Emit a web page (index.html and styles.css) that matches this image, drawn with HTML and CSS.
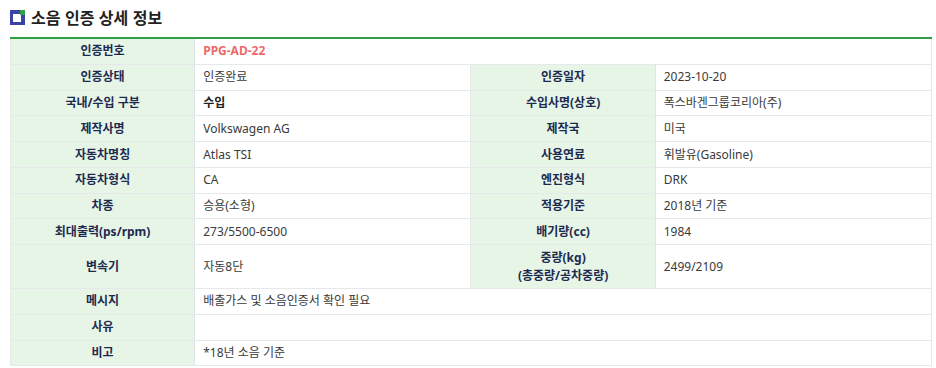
FILE: index.html
```html
<!DOCTYPE html>
<html lang="ko">
<head>
<meta charset="utf-8">
<link rel="stylesheet" href="styles.css">
</head>
<body>
<div class="wrap">
  <h2 class="title">
    <span class="ico"><span class="ico-in"></span><span class="ico-g"></span></span>
    소음 인증 상세 정보
  </h2>
  <table class="info">
    <colgroup><col class="c1"><col class="c2"><col class="c1"><col class="c2"></colgroup>
    <tr><th>인증번호</th><td colspan="3" class="red">PPG-AD-22</td></tr>
    <tr><th>인증상태</th><td>인증완료</td><th>인증일자</th><td>2023-10-20</td></tr>
    <tr><th>국내/수입 구분</th><td class="b">수입</td><th>수입사명(상호)</th><td>폭스바겐그룹코리아(주)</td></tr>
    <tr><th>제작사명</th><td>Volkswagen AG</td><th>제작국</th><td>미국</td></tr>
    <tr><th>자동차명칭</th><td>Atlas TSI</td><th>사용연료</th><td>휘발유(Gasoline)</td></tr>
    <tr><th>자동차형식</th><td>CA</td><th>엔진형식</th><td>DRK</td></tr>
    <tr><th>차종</th><td>승용(소형)</td><th>적용기준</th><td>2018년 기준</td></tr>
    <tr><th>최대출력(ps/rpm)</th><td>273/5500-6500</td><th>배기량(cc)</th><td>1984</td></tr>
    <tr><th>변속기</th><td>자동8단</td><th>중량(kg)<br>(총중량/공차중량)</th><td>2499/2109</td></tr>
    <tr><th>메시지</th><td colspan="3">배출가스 및 소음인증서 확인 필요</td></tr>
    <tr><th>사유</th><td colspan="3"></td></tr>
    <tr><th>비고</th><td colspan="3">*18년 소음 기준</td></tr>
  </table>
</div>
</body>
</html>
```
FILE: styles.css
```css
html, body {
  margin: 0;
  padding: 0;
  background: #ffffff;
}
body {
  font-family: "Noto Sans", "Noto Sans CJK KR", sans-serif;
  color: #333;
}
.wrap {
  padding: 7px 4px 0 10px;
}
.title {
  display: flex;
  align-items: center;
  gap: 6px;
  margin: 0 0 10px 0;
  font-family: "Noto Sans CJK KR", sans-serif;
  font-size: 16px;
  font-weight: 700;
  color: #222;
  height: 20px;
}
.ico {
  position: relative;
  width: 15px;
  height: 15px;
  background: #3b44a6;
  flex: none;
}
.ico-in {
  position: absolute;
  left: 3px;
  top: 4px;
  width: 8px;
  height: 8px;
  background: #fff;
}
.ico-g {
  position: absolute;
  right: 0;
  top: 0;
  width: 5px;
  height: 5px;
  background: #2fa34a;
}
.info {
  width: 922px;
  border-collapse: collapse;
  table-layout: fixed;
  border-top: 2px solid #2f9e47;
  font-size: 12px;
  line-height: 18px;
}
.c1 { width: 20%; }
.c2 { width: 30%; }
.info th, .info td {
  border: 1px solid #e6e8ea;
  padding: 3.4px 8px;
  height: 18px;
}
.info th {
  background: #e7f5e7;
  color: #1d2a4f;
  font-weight: 700;
  text-align: center;
  border-right-color: #dfe5e2;
}
.info td {
  text-align: left;
  color: #3a3a3a;
}
.info .red {
  color: #ee6a6a;
  font-weight: 700;
}
.info .b {
  font-weight: 700;
  color: #222;
}
```
